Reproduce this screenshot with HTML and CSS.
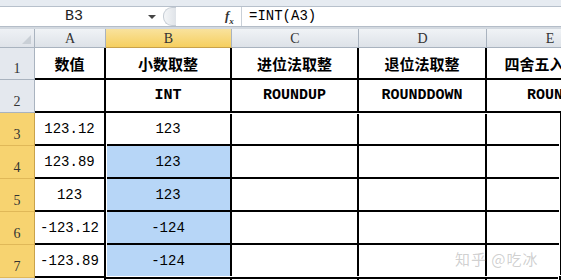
FILE: index.html
```html
<!DOCTYPE html>
<html lang="zh-CN">
<head>
    <meta charset="UTF-8">
    <title>INT</title>
    <link rel="stylesheet" href="styles.css">
</head>
<body>
    <div class="top-strip"></div>

    <div class="formula-bar">
        <div class="name-box">B3</div>
        <div class="name-arrow"></div>
        <div class="splitter"></div>
        <div class="fx">f<sub>x</sub></div>
        <div class="formula">=INT(A3)</div>
    </div>

    <div class="bar-gap"></div>

    <div class="sheet">
        <div class="corner"></div>
        <div class="col-head">A</div>
        <div class="col-head active">B</div>
        <div class="col-head">C</div>
        <div class="col-head">D</div>
        <div class="col-head">E</div>

        <div class="row-head">1</div>
        <div class="cell title">数值</div>
        <div class="cell title">小数取整</div>
        <div class="cell title">进位法取整</div>
        <div class="cell title">退位法取整</div>
        <div class="cell title">四舍五入取整</div>

        <div class="row-head">2</div>
        <div class="cell"></div>
        <div class="cell func">INT</div>
        <div class="cell func">ROUNDUP</div>
        <div class="cell func">ROUNDDOWN</div>
        <div class="cell func">ROUND</div>

        <div class="row-head active">3</div>
        <div class="cell num">123.12</div>
        <div class="cell num">123</div>
        <div class="cell"></div>
        <div class="cell"></div>
        <div class="cell"></div>

        <div class="row-head active">4</div>
        <div class="cell num">123.89</div>
        <div class="cell num picked">123</div>
        <div class="cell"></div>
        <div class="cell"></div>
        <div class="cell"></div>

        <div class="row-head active">5</div>
        <div class="cell num">123</div>
        <div class="cell num picked">123</div>
        <div class="cell"></div>
        <div class="cell"></div>
        <div class="cell"></div>

        <div class="row-head active">6</div>
        <div class="cell num">-123.12</div>
        <div class="cell num picked">-124</div>
        <div class="cell"></div>
        <div class="cell"></div>
        <div class="cell"></div>

        <div class="row-head active">7</div>
        <div class="cell num">-123.89</div>
        <div class="cell num picked">-124</div>
        <div class="cell"></div>
        <div class="cell"></div>
        <div class="cell"></div>

        <div class="row-head"></div>
        <div class="cell"></div>
        <div class="cell"></div>
        <div class="cell"></div>
        <div class="cell"></div>
        <div class="cell"></div>

        <div class="selection"><span class="fill-handle"></span></div>
        <div class="watermark">知乎 @吃冰</div>
    </div>
</body>
</html>
```

FILE: styles.css
```css
body {
    margin: 0;
    overflow: hidden;
    background: #dfe4ea;
    font-family: "Liberation Mono", monospace;
    color: #000;
}

.top-strip {
    height: 6px;
    background: #e6ebf1;
    border-bottom: 1px solid #b7c0cb;
}

.formula-bar {
    display: flex;
    align-items: center;
    height: 19px;
    background: #fff;
}

.name-box {
    width: 148px;
    text-align: center;
    font-size: 15px;
    color: #222;
}

.name-arrow {
    width: 0;
    height: 0;
    border-left: 4px solid transparent;
    border-right: 4px solid transparent;
    border-top: 4px solid #444;
    margin-right: 7px;
}

.splitter {
    width: 12px;
    height: 17px;
    border-radius: 9px 0 0 9px;
    border: 1px solid #c5ccd4;
    border-right: none;
    background: linear-gradient(to right, #f4f6f8, #dfe3e8);
    margin-right: 49px;
}

.fx {
    width: 15px;
    font-family: "Liberation Serif", serif;
    font-style: italic;
    font-weight: bold;
    font-size: 13px;
    color: #333;
}

.fx sub {
    font-size: 9px;
}

.formula {
    flex: 1;
    height: 19px;
    line-height: 19px;
    border-left: 1px solid #c9d0d8;
    margin-left: 1px;
    padding-left: 7px;
    font-size: 14px;
}

.bar-gap {
    height: 2px;
    background: #d3d9e0;
    border-top: 1px solid #b4bdc8;
}

.sheet {
    position: relative;
    width: 561px;
    overflow: hidden;
    display: grid;
    grid-template-columns: 35px 71px 126px 127px 128px 127px;
    grid-template-rows: 19px 32px 33px 33px 33px 33px 33px 33px 20px;
}

.corner {
    background: linear-gradient(#eef1f5, #dfe3e9);
    border-right: 1px solid #a9b3bf;
    border-bottom: 1px solid #a9b3bf;
    position: relative;
}

.corner::after {
    content: "";
    position: absolute;
    right: 3px;
    bottom: 3px;
    border-left: 9px solid transparent;
    border-bottom: 9px solid #c9cfd6;
}

.col-head {
    background: linear-gradient(#f0f3f6, #dde2e8);
    border-right: 1px solid #a9b3bf;
    border-bottom: 1px solid #a9b3bf;
    text-align: center;
    font-family: "Liberation Serif", serif;
    font-size: 14px;
    line-height: 19px;
    color: #333;
}

.col-head.active {
    background: linear-gradient(#f9e29d, #f6cf5f);
    border-bottom-color: #c9a24a;
}

.row-head {
    background: #e4e8ee;
    border-right: 1px solid #a9b3bf;
    border-bottom: 1px solid #a9b3bf;
    display: flex;
    align-items: flex-end;
    justify-content: center;
    padding-bottom: 2px;
    box-sizing: border-box;
    font-family: "Liberation Serif", serif;
    font-size: 14px;
    color: #333;
}

.row-head.active {
    background: #f7d370;
    border-right-color: #c9a24a;
    border-bottom-color: #e0b858;
}

.cell {
    background: #fff;
    border-right: 2px solid #000;
    border-bottom: 2px solid #000;
    box-sizing: border-box;
    display: flex;
    align-items: center;
    justify-content: center;
    white-space: nowrap;
    overflow: hidden;
}

.title {
    font-family: "Noto Sans CJK SC", sans-serif;
    font-weight: bold;
    font-size: 15px;
}

.func {
    font-weight: bold;
    font-size: 15px;
}

.num {
    font-size: 14px;
}

.picked {
    background: #b7d6f7;
}

/* selection outline over B3:B7, uses its grid area as containing block */
.selection {
    position: absolute;
    grid-column: 3;
    grid-row: 4 / 9;
    top: -2px;
    left: -2px;
    right: -1px;
    bottom: -1px;
    border: 2px solid #000;
    box-shadow: inset 0 0 0 1px #fff;
    pointer-events: none;
}

.fill-handle {
    position: absolute;
    right: -5px;
    bottom: -5px;
    width: 5px;
    height: 5px;
    background: #000;
    border: 1px solid #fff;
}

.watermark {
    position: absolute;
    left: 455px;
    top: 219px;
    font-family: "Noto Sans CJK SC", sans-serif;
    font-size: 15px;
    color: rgba(150, 150, 150, 0.45);
    letter-spacing: 1px;
}
```
